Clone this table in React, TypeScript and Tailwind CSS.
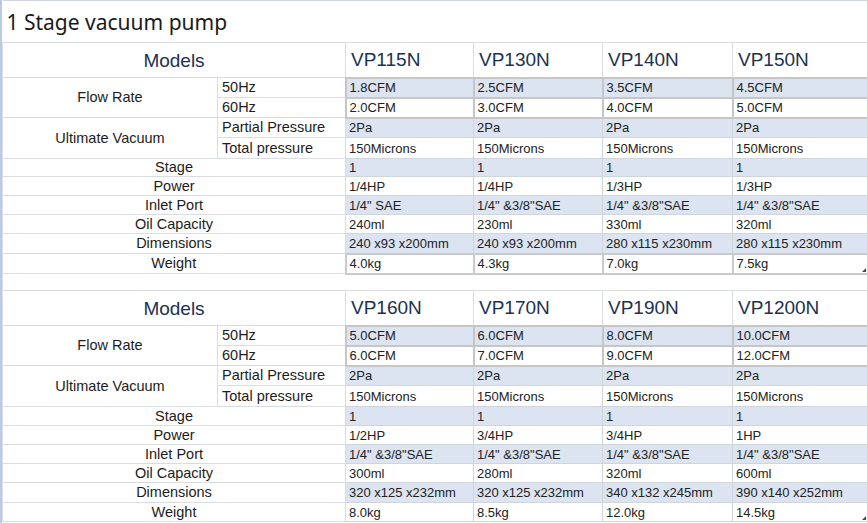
import React from "react";

interface PumpGroup {
  models: string[];
  flow50: string[];
  flow60: string[];
  power: string[];
  inlet: string[];
  oil: string[];
  dims: string[];
  weight: string[];
}

const groups: PumpGroup[] = [
  {
    models: ["VP115N", "VP130N", "VP140N", "VP150N"],
    flow50: ["1.8CFM", "2.5CFM", "3.5CFM", "4.5CFM"],
    flow60: ["2.0CFM", "3.0CFM", "4.0CFM", "5.0CFM"],
    power: ["1/4HP", "1/4HP", "1/3HP", "1/3HP"],
    inlet: ['1/4" SAE', '1/4" &3/8"SAE', '1/4" &3/8"SAE', '1/4" &3/8"SAE'],
    oil: ["240ml", "230ml", "330ml", "320ml"],
    dims: ["240 x93 x200mm", "240 x93 x200mm", "280 x115 x230mm", "280 x115 x230mm"],
    weight: ["4.0kg", "4.3kg", "7.0kg", "7.5kg"],
  },
  {
    models: ["VP160N", "VP170N", "VP190N", "VP1200N"],
    flow50: ["5.0CFM", "6.0CFM", "8.0CFM", "10.0CFM"],
    flow60: ["6.0CFM", "7.0CFM", "9.0CFM", "12.0CFM"],
    power: ["1/2HP", "3/4HP", "3/4HP", "1HP"],
    inlet: ['1/4" &3/8"SAE', '1/4" &3/8"SAE', '1/4" &3/8"SAE', '1/4" &3/8"SAE'],
    oil: ["300ml", "280ml", "320ml", "600ml"],
    dims: ["320 x125 x232mm", "320 x125 x232mm", "340 x132 x245mm", "390 x140 x252mm"],
    weight: ["8.0kg", "8.5kg", "12.0kg", "14.5kg"],
  },
];

const label = "border border-[#d9dce0] text-[14.5px] text-[#1c1c1c] leading-none";
const grid = "border border-[#d0d5dc]";

function DataCells({ values, blue, heavy }: { values: string[]; blue?: boolean; heavy?: boolean }) {
  return (
    <>
      {values.map((v, i) => (
        <td
          key={i}
          className={`${heavy ? "border-2 border-[#c6c6c6]" : grid} px-[3px] text-[13px] leading-none text-[#222] whitespace-nowrap ${
            blue ? "bg-[#dbe4f0]" : "bg-white"
          }`}
        >
          {v}
        </td>
      ))}
    </>
  );
}

function Corner() {
  return (
    <svg className="absolute right-[1px] bottom-[1px]" width="4" height="4" viewBox="0 0 4 4">
      <polygon points="4,0 4,4 0,4" fill="#3a4a60" />
    </svg>
  );
}

function Group({ g, last }: { g: PumpGroup; last?: boolean }) {
  const simple: [string, string[], boolean, number][] = [
    ["Stage", ["1", "1", "1", "1"], true, last ? 19 : 18],
    ["Power", g.power, false, 19],
    ["Inlet Port", g.inlet, true, 19],
    ["Oil Capacity", g.oil, false, 19],
    ["Dimensions", g.dims, true, 20],
  ];
  return (
    <>
      <tr className="h-[35px]">
        <td colSpan={2} className="border border-[#d9dce0] text-center text-[19px] text-[#1b3152] leading-none">
          Models
        </td>
        {g.models.map((m) => (
          <td key={m} className="border border-[#d9dce0] px-[5px] text-[19px] text-[#1b3152] leading-none">
            {m}
          </td>
        ))}
      </tr>
      <tr className="h-[20px]">
        <td rowSpan={2} className={`${label} text-center`}>Flow Rate</td>
        <td className={`${label} px-1`}>50Hz</td>
        <DataCells values={g.flow50} blue heavy />
      </tr>
      <tr className="h-[20px]">
        <td className={`${label} px-1`}>60Hz</td>
        <DataCells values={g.flow60} heavy />
      </tr>
      <tr className="h-[20px]">
        <td rowSpan={2} className={`${label} text-center`}>Ultimate Vacuum</td>
        <td className={`${label} px-1`}>Partial Pressure</td>
        <DataCells values={["2Pa", "2Pa", "2Pa", "2Pa"]} blue />
      </tr>
      <tr className="h-[21px]">
        <td className={`${label} px-1`}>Total pressure</td>
        <DataCells values={["150Microns", "150Microns", "150Microns", "150Microns"]} />
      </tr>
      {simple.map(([name, vals, blue, h]) => (
        <tr key={name} style={{ height: h }}>
          <td colSpan={2} className={`${label} text-center`}>{name}</td>
          <DataCells values={vals} blue={blue} />
        </tr>
      ))}
      <tr className={last ? "h-[19px]" : "h-[20px]"}>
        <td colSpan={2} className={`${label} text-center`}>Weight</td>
        {g.weight.map((v, i) => (
          <td
            key={i}
            className={`${last ? grid : "border-2 border-[#cacaca]"} relative bg-white px-[3px] text-[13px] leading-none text-[#222]`}
          >
            {v}
            {i === 3 && <Corner />}
          </td>
        ))}
      </tr>
    </>
  );
}

export default function App() {
  return (
    <div className="w-[867px] h-[523px] overflow-hidden bg-white border-l-2 border-[#b9cbe4]" style={{ fontFamily: '"Liberation Sans", Arial, sans-serif' }}>
      <table className="table-fixed border-collapse w-[865px]">
        <colgroup>
          <col className="w-[215px]" />
          <col className="w-[128px]" />
          <col className="w-[128px]" />
          <col className="w-[129px]" />
          <col className="w-[130px]" />
          <col className="w-[135px]" />
        </colgroup>
        <tbody>
          <tr className="h-[42px]">
            <td
              colSpan={6}
              className="border-t border-[#cfd6df] border-b border-b-[#d9dce0] pl-[4px] pt-[2px] text-[21px] text-[#1a1a1a] leading-none"
              style={{ fontFamily: '"Noto Sans", "Open Sans", sans-serif' }}
            >
              1 Stage vacuum pump
            </td>
          </tr>
          <Group g={groups[0]} />
          <tr className="h-[17px]">
            <td colSpan={6} className="border border-[#d9dce0]" />
          </tr>
          <Group g={groups[1]} last />
        </tbody>
      </table>
    </div>
  );
}
